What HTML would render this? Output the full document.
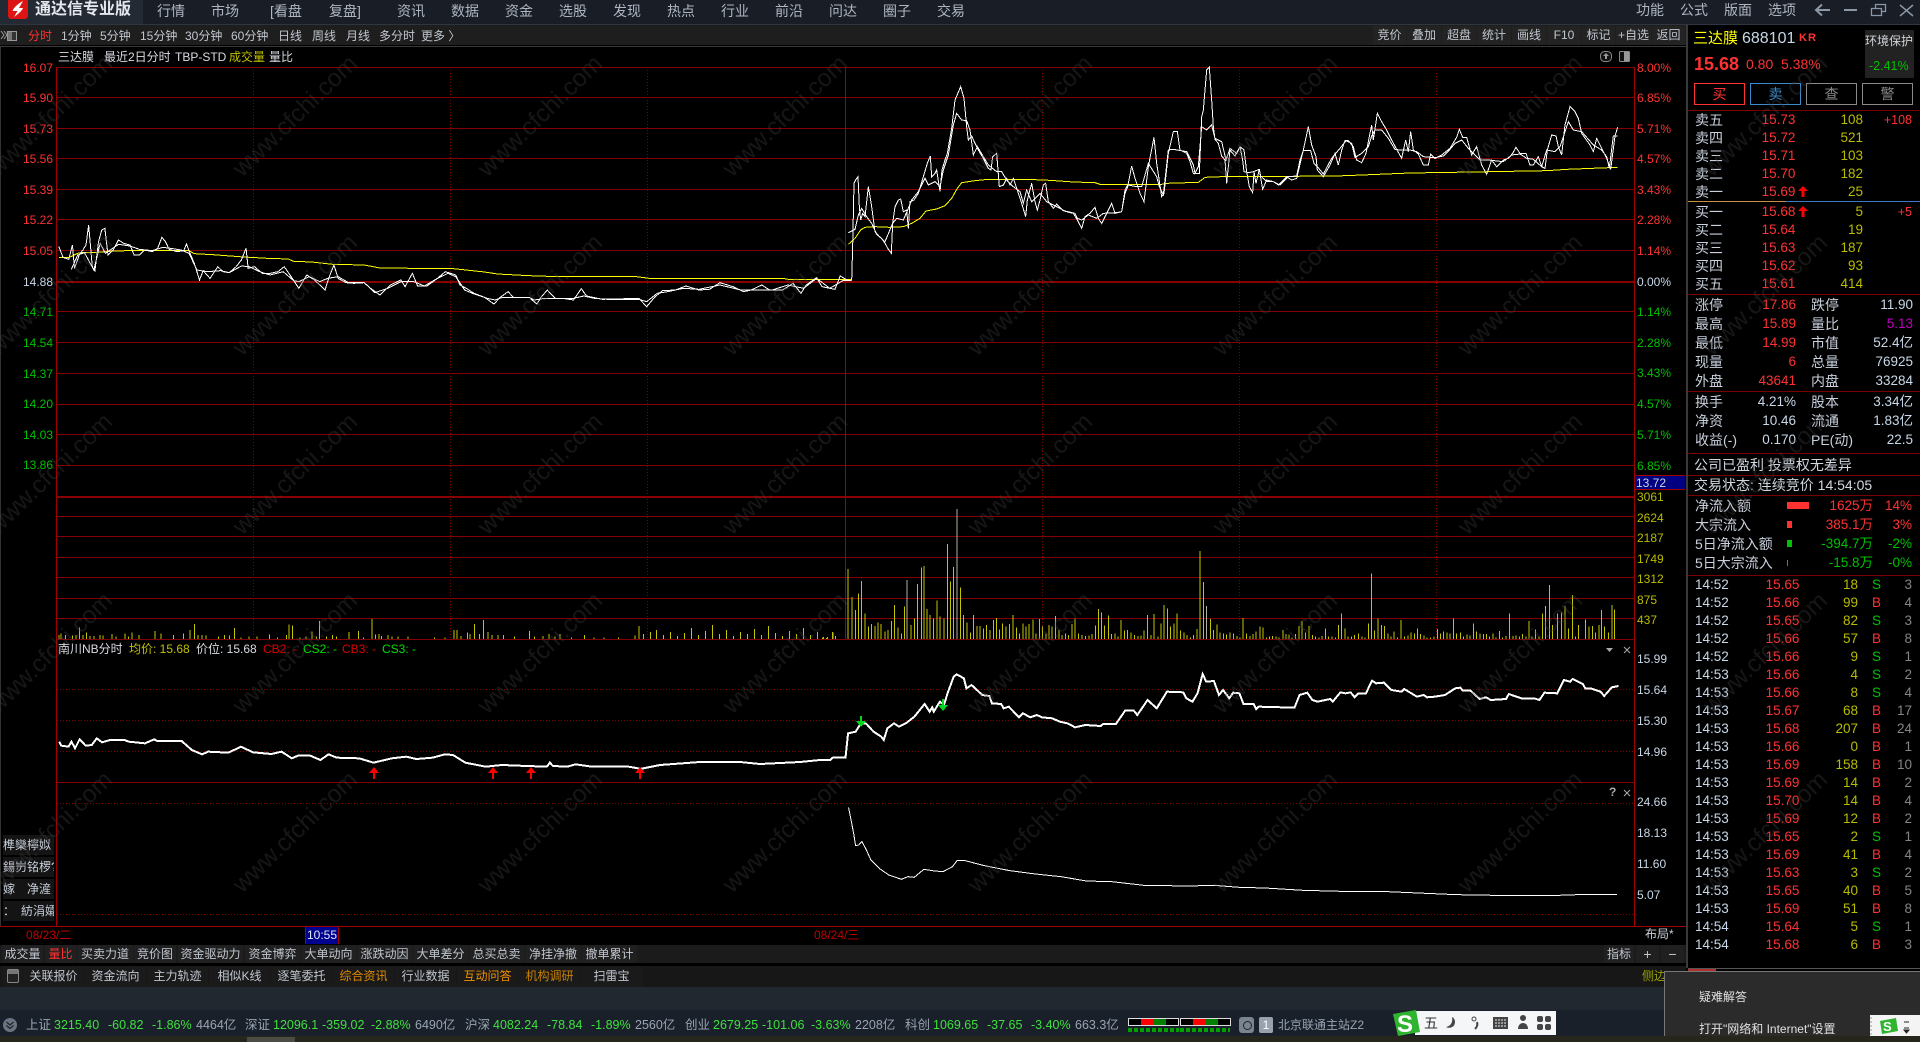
<!DOCTYPE html>
<html><head><meta charset="utf-8"><title>通达信专业版</title>
<style>
html,body{margin:0;padding:0;background:#000;width:1920px;height:1042px;overflow:hidden}
body{position:relative;font-family:"Liberation Sans","Noto Sans CJK SC",sans-serif;font-size:12px;color:#c8d0dc}
.a{position:absolute;white-space:nowrap;line-height:18px;height:18px}
.m{position:absolute;white-space:nowrap;font-size:14px;line-height:18px;top:2px;color:#aeb6c2}
.b{position:absolute;top:27px;white-space:nowrap;line-height:18px;color:#c0c6d0}
.tb{position:absolute;top:26px;height:19px;line-height:19px;background:#232323;text-align:center;color:#c0c6d0}
.l{position:absolute;left:13px;width:40px;text-align:right;line-height:18px}
.p{position:absolute;left:1637px;line-height:18px}
.red{color:#ff3232}.grn{color:#00c000}.wht{color:#c8d8e8}.yel{color:#b8bc00}
.r{position:absolute;left:1688px;width:232px;height:18px;line-height:18px;font-size:13.5px}
.r span{position:absolute;white-space:nowrap}
.n{left:7px;font-size:14px;color:#c8d0dc}.v{left:73.6px;color:#ff3232}.q{right:57px;color:#b8bc00}.d{right:8px;font-size:12.5px;color:#ff3232}
.v1{right:124px}.n2{left:123px;font-size:14px;color:#c8d0dc}.v2{right:7px;color:#c8d8e8}
.tm{left:7px;color:#c8d8e8}.pr{left:77.6px;color:#ff3232}.qq{right:62px;color:#b8bc00}.bs{left:184px}.ct{right:8px;color:#858585}
.c{position:absolute;top:945px;height:18px;line-height:18px;background:#202020;text-align:center;color:#c0c6d0}
.e{position:absolute;top:966px;height:21px;line-height:21px;background:#1a1a1a;text-align:center;color:#c0c6d0;width:61px}
.s{position:absolute;top:1016px;line-height:18px;font-size:12.5px;white-space:nowrap;color:#98a4b4}
.g{color:#3fe03f}
.btn{position:absolute;top:83px;width:49px;height:20px;line-height:20px;text-align:center;font-size:14px;box-sizing:content-box}
.gb{position:absolute;left:3px;width:51px;height:20px;line-height:20px;background:#141414;color:#c8d0dc;overflow:hidden;white-space:nowrap;font-size:12px}
.lin{vector-effect:non-scaling-stroke;fill:none;shape-rendering:crispEdges}
</style></head><body>

<!-- title bar -->
<div style="position:absolute;left:0;top:0;width:1920px;height:24px;background:#181d26"></div>
<div style="position:absolute;left:0;top:0;width:143px;height:24px;background:#242a33"></div>
<div style="position:absolute;left:0;top:24px;width:1920px;height:1px;background:#2f3640"></div>
<div class="a" style="left:35px;top:1px;font-size:16px;font-weight:bold;color:#e4e8ee;line-height:18px">通达信专业版</div>
<div class="m" style="left:157px">行情</div><div class="m" style="left:211px">市场</div><div class="m" style="left:270px">[看盘</div><div class="m" style="left:329px">复盘]</div><div class="m" style="left:397px">资讯</div><div class="m" style="left:451px">数据</div><div class="m" style="left:505px">资金</div><div class="m" style="left:559px">选股</div><div class="m" style="left:613px">发现</div><div class="m" style="left:667px">热点</div><div class="m" style="left:721px">行业</div><div class="m" style="left:775px">前沿</div><div class="m" style="left:829px">问达</div><div class="m" style="left:883px">圈子</div><div class="m" style="left:937px">交易</div>
<div class="m" style="left:1636px;top:1px">功能</div><div class="m" style="left:1680px;top:1px">公式</div><div class="m" style="left:1724px;top:1px">版面</div><div class="m" style="left:1768px;top:1px">选项</div>

<!-- toolbar -->
<div style="position:absolute;left:0;top:25px;width:1686px;height:20px;background:#1e1e1e"></div>
<div style="position:absolute;left:0;top:46px;width:1686px;height:1px;background:#3a3a3a"></div>
<div class="b" style="left:28px;color:#ff3232">分时</div><div class="b" style="left:61px">1分钟</div><div class="b" style="left:100px">5分钟</div><div class="b" style="left:140px">15分钟</div><div class="b" style="left:185px">30分钟</div><div class="b" style="left:231px">60分钟</div><div class="b" style="left:278px">日线</div><div class="b" style="left:312px">周线</div><div class="b" style="left:346px">月线</div><div class="b" style="left:379px">多分时</div><div class="b" style="left:421px">更多 〉</div>
<div class="tb" style="left:1373px;width:33px">竞价</div><div class="tb" style="left:1407px;width:34px">叠加</div><div class="tb" style="left:1442px;width:34px">超盘</div><div class="tb" style="left:1477px;width:34px">统计</div><div class="tb" style="left:1512px;width:34px">画线</div><div class="tb" style="left:1547px;width:34px">F10</div><div class="tb" style="left:1582px;width:33px">标记</div><div class="tb" style="left:1616px;width:35px">+自选</div><div class="tb" style="left:1652px;width:33px">返回</div>

<!-- chart grid & lines -->
<svg width="1920" height="1042" style="position:absolute;left:0;top:0" xmlns="http://www.w3.org/2000/svg">
<g fill="none" shape-rendering="crispEdges">
<path stroke="#850000" d="M56 67.5H1634M56 97.5H1634M56 128.5H1634M56 158.5H1634M56 189.5H1634M56 219.5H1634M56 250.5H1634M56 311.5H1634M56 342.5H1634M56 373.5H1634M56 404.5H1634M56 434.5H1634M56 465.5H1634M56 516.5H1634M56 536.5H1634M56 557.5H1634M56 577.5H1634M56 598.5H1634M56 618.5H1634M56 639.5H1634M56 782.5H1634"/>
<path stroke="#8a0000" stroke-width="2" d="M56 282H1634M56 497H1634"/>
<path stroke="#a00000" d="M56.5 67V926M1634.5 67V926M845.5 67V639M0 926.5H1686"/>
<path stroke="#800000" stroke-dasharray="1 2" d="M253.5 70V639M450.5 70V639M647.5 70V639M1042.5 70V639M1239.5 70V639M1436.5 70V639M57 689.5H1634M57 720.5H1634M57 751.5H1634M57 803.5H1634M57 914.5H1634"/>
<path stroke="#333" d="M0.5 47V926"/>
<path stroke="#3a3a3a" stroke-width="2" d="M1687 25V968"/>
<!-- right panel rules -->
<path stroke="#7a0000" d="M1688 110.5H1920M1688 294.5H1920M1688 391.5H1920M1688 453.5H1920M1688 475.5H1920M1688 495.5H1920M1688 575.5H1920"/>
<path stroke="#c89040" d="M1688 201.5H1786"/><path stroke="#3c78c8" d="M1786 201.5H1920"/>
<path stroke="#555" d="M1688 968.5H1920"/>
</g>

<!-- volume -->
<g stroke="#c4c400" transform="translate(0,480) scale(.40816,.33333)">
<path class="lin" stroke="#c4c400" d="M145 477V465M150 477V460M160 477V465M178 477V467M186 477V465M195 477V442M203 477V465M212 477V457M220 477V468M230 477V468M245 477V465M252 477V467M275 477V462M284 477V470M306 477V460M315 477V470M324 477V458M340 477V465M380 477V453M395 477V460M425 477V465M450 477V460M465 477V450M476 477V432M485 477V465M495 477V465M505 477V467M535 477V470M550 477V465M562 477V467M574 477V444M590 477V472M610 477V470M630 477V470M660 477V463M680 477V472M702 477V465M708 477V433M717 477V436M735 477V472M750 477V470M765 477V454M775 477V470M783 477V423M800 477V470M815 477V465M825 477V470M855 477V456M878 477V453M890 477V472M912 477V417M920 477V463M928 477V462M935 477V468M950 477V465M960 477V470M975 477V470M1000 477V470M1065 477V472M1090 477V472M1112 477V450M1120 477V450M1130 477V468M1145 477V457M1152 477V462M1162 477V432M1175 477V462M1184 477V420M1195 477V456M1205 477V465M1220 477V465M1233 477V465M1260 477V470M1297 477V453M1310 477V470M1330 477V468M1345 477V462M1360 477V470M1372 477V462M1400 477V472M1432 477V465M1455 477V472M1480 477V472M1515 477V472M1556 477V467M1565 477V438"/>
</g>
<path shape-rendering="crispEdges" stroke="#c4c400" fill="none" d="M643.5 639V634M650.5 639V632M656.5 639V630M663.5 639V635M670.5 639V632M677.5 639V636M684.5 639V633M691.5 639V628M698.5 639V635M705.5 639V631M712.5 639V625M719.5 639V634M726.5 639V630M733.5 639V636M740.5 639V632M747.5 639V634M754.5 639V629M761.5 639V635M768.5 639V626M775.5 639V633M782.5 639V636M789.5 639V631M796.5 639V634M803.5 639V628M810.5 639V635M817.5 639V632M823.5 639V637M827.5 639V637M832.5 639V632M835.5 639V636"/>
<g transform="translate(820,480) scale(.5102,.33333)">
<path class="lin" stroke="#c4c400" d="M55 477V267M63 477V351M70 477V390M75 477V340M81 477V303M88 477V400M95 477V440M101 477V432M108 477V438M114 477V427M120 477V432M127 477V455M133 477V450M140 477V423M146 477V375M153 477V443M160 477V460M166 477V380M178 477V435M185 477V415M191 477V312M199 477V263M204 477V258M210 477V387M216 477V405M222 477V415M229 477V362M235 477V410M243 477V415M250 477V192M256 477V305M262 477V261M275 477V323M281 477V405M288 477V427M295 477V458M301 477V405M308 477V438M314 477V438M320 477V445M326 477V435M333 477V450M340 477V420M346 477V414M352 477V448M358 477V430M365 477V440M371 477V432M378 477V405M385 477V442M391 477V460M398 477V430M404 477V440M410 477V432M417 477V418M423 477V460M430 477V417M436 477V440M443 477V460M449 477V435M455 477V440M462 477V408M468 477V450M474 477V465M481 477V460M487 477V465M494 477V432M500 477V415M507 477V460M514 477V465M520 477V468M527 477V467M533 477V462M540 477V436M546 477V387M552 477V397M558 477V437M565 477V407M571 477V462M578 477V460M584 477V470M590 477V420M597 477V452M603 477V450M610 477V458M616 477V465M623 477V468M629 477V467M635 477V452M642 477V405M649 477V465M655 477V402M662 477V470M668 477V430M674 477V375M681 477V385M687 477V440M694 477V430M700 477V400M707 477V452M713 477V458M719 477V465M726 477V472M732 477V465M739 477V447M745 477V213M752 477V306M765 477V417M771 477V450M778 477V434M784 477V458M791 477V460M797 477V463M804 477V457M810 477V460M817 477V468M823 477V472M829 477V414M836 477V460M843 477V468M849 477V462M855 477V455M862 477V440M868 477V442M875 477V472M881 477V470M887 477V468M894 477V470M900 477V472M907 477V450M913 477V462M919 477V464M925 477V473M932 477V462M939 477V438M945 477V423M952 477V457M958 477V438M965 477V465M971 477V470M978 477V472M984 477V468M991 477V445M997 477V470M1004 477V470M1010 477V472M1016 477V435M1022 477V400M1029 477V445M1035 477V470M1042 477V470M1048 477V465M1055 477V460M1062 477V470M1068 477V472M1075 477V430M1081 477V280M1087 477V452M1094 477V415M1101 477V435M1106 477V438M1113 477V460M1119 477V470M1125 477V455M1132 477V472M1139 477V420M1146 477V470M1152 477V466M1158 477V458M1165 477V460M1171 477V445M1177 477V462M1184 477V466M1190 477V472M1197 477V472M1203 477V470M1210 477V447M1216 477V460M1222 477V455M1229 477V457M1235 477V460M1242 477V415M1248 477V460M1255 477V458M1261 477V470M1268 477V463M1274 477V466M1281 477V430M1287 477V455M1294 477V460M1300 477V462M1306 477V462M1312 477V470M1319 477V460M1325 477V472M1332 477V453M1338 477V472M1345 477V468M1351 477V400M1358 477V468M1364 477V466M1371 477V470M1377 477V462M1384 477V470M1390 477V423M1396 477V470M1402 477V448M1409 477V470M1416 477V400M1422 477V378M1430 477V315M1436 477V435M1446 477V400M1453 477V398M1460 477V378M1467 477V445M1475 477V345M1481 477V470M1487 477V435M1500 477V418M1507 477V440M1514 477V438M1520 477V458M1527 477V435M1532 477V390M1538 477V440M1545 477V458M1552 477V375M1557 477V388M5 477V472M13 477V474M25 477V458M30 477V468"/>
<path class="lin" stroke="#b0b0a0" d="M269 477V87M171 477V300M758 477V378"/>
</g>

<!-- day 1 price -->
<g transform="translate(40,210) scale(.523,.33333)">
<polyline class="lin" stroke="#ffff00" stroke-width="1" points="36,143 55,143 72,130 85,127 105,128 130,124 165,122 270,121 285,122 295,131 330,134 390,141 435,145 475,147 485,154 520,156 560,163 620,165 650,174 790,176 815,180 850,186 875,192 935,197 990,200 1140,200 1165,205 1420,205 1430,208 1552,209"/>
<polyline class="lin" stroke="#fff" points="60,178 72,135 85,128 103,180 115,100 125,130 150,103 172,108 190,118 215,122 235,112 250,115 270,120 285,130 300,180 320,185 345,182 362,188 385,168 400,170 420,185 440,195 465,185 485,212 495,215 515,200 535,215 550,205 570,200 590,218 620,218 640,248 665,235 690,215 715,215 735,228 760,205 780,190 795,200 812,240 830,252 855,265 870,270 885,262 935,262 945,270 965,265 990,265 1020,265 1040,258 1060,265 1085,268 1145,268 1160,275 1180,250 1200,245 1230,235 1260,238 1300,225 1340,240 1400,240 1430,225 1460,235 1485,205 1510,235 1535,212 1552,212"/>
<polyline class="lin" stroke="#fff" points="36,110 44,142 55,148 62,105 66,175 75,135 82,120 88,105 93,45 100,170 105,183 112,95 118,60 124,55 130,135 140,120 150,90 160,100 172,105 180,135 190,135 200,120 215,125 225,115 233,82 240,95 247,118 262,125 275,122 280,102 287,130 295,160 305,210 312,182 325,205 340,170 350,185 362,188 375,170 385,150 394,115 398,175 410,170 425,190 440,190 455,185 467,170 478,195 495,235 510,195 525,210 545,240 552,205 562,165 570,205 585,218 600,220 620,218 632,235 650,255 660,240 670,225 690,210 698,230 712,190 722,228 740,228 760,205 775,185 795,195 803,225 815,235 830,250 850,262 868,282 880,262 895,245 905,262 935,262 950,282 958,262 970,240 985,265 1000,265 1020,270 1035,236 1045,258 1075,268 1145,265 1160,290 1175,262 1190,242 1215,240 1235,228 1260,240 1280,238 1300,218 1325,230 1345,245 1360,240 1380,225 1395,240 1420,240 1440,220 1455,250 1465,225 1485,203 1495,230 1520,238 1530,198 1545,212 1552,212"/>
</g>
<!-- day 2 price -->
<g transform="translate(840,50) scale(.33333)">
<polyline class="lin" stroke="#ffff00" stroke-width="1" points="25,583 45,565 62,540 75,532 105,530 150,532 190,530 215,520 240,505 258,483 290,477 315,467 335,445 352,415 365,398 405,392 445,388 560,388 630,391 700,396 765,398 780,403 855,403 965,403 980,400 1075,397 1095,382 1145,380 1200,380"/>
<polyline class="lin" stroke="#fff" points="25,548 45,538 55,495 65,475 80,500 95,520 108,548 118,560 135,575 158,520 170,505 190,510 205,475 215,450 235,425 255,385 265,405 285,395 300,410 310,360 325,315 340,225 350,190 365,210 380,212 390,240 400,315 412,290 430,320 445,345 470,365 485,365 500,390 520,410 540,425 550,460 560,420 575,455 600,430 620,455 650,470 675,483 705,490 712,505 725,510 745,495 770,505 790,490 830,488 845,485 855,430 865,405 890,410 905,410 925,340 950,380 958,410 970,435 985,300 1000,298 1040,305 1060,345 1065,370 1075,350 1085,230 1100,240 1115,225 1125,265 1145,275 1158,330 1170,295 1190,310 1200,290"/>
<polyline class="lin" stroke="#fff" points="35,692 38,590 42,400 48,388 54,380 58,470 62,510 68,490 75,500 85,410 95,470 105,545 112,555 125,565 135,580 145,598 154,610 158,520 165,470 175,450 182,447 190,485 200,480 205,535 210,455 222,450 235,430 250,380 262,340 271,318 275,380 285,370 290,360 300,425 306,360 315,330 322,310 335,235 345,150 362,110 372,145 380,230 385,270 395,258 405,280 415,300 430,325 445,355 453,360 458,320 470,310 478,410 490,405 500,385 510,405 520,385 535,430 545,460 557,500 562,450 575,400 585,455 592,480 600,450 610,405 617,400 625,455 640,475 650,462 670,482 690,488 700,490 712,510 725,535 735,500 750,490 765,472 775,505 785,520 800,490 815,460 825,490 845,485 855,420 865,400 875,348 885,385 900,430 912,455 925,350 942,262 950,340 965,440 972,430 985,310 1000,245 1012,245 1020,300 1040,310 1050,335 1060,370 1078,370 1085,200 1090,180 1100,60 1108,52 1115,150 1120,230 1125,268 1135,280 1145,318 1155,330 1160,400 1170,300 1185,318 1200,290"/>
</g>
<g transform="translate(1240,50) scale(.33333)">
<polyline class="lin" stroke="#ffff00" stroke-width="1" points="0,380 290,378 390,374 510,369 700,366 920,362 980,358 1133,352"/>
<polyline class="lin" stroke="#fff" points="0,290 12,300 20,365 28,410 38,428 42,365 48,400 58,358 68,418 80,390 100,395 115,405 140,380 155,390 170,385 190,300 205,230 215,285 228,320 232,360 250,380 270,345 285,310 295,345 305,300 315,272 325,272 340,290 350,330 365,338 378,310 395,225 400,270 412,190 425,215 440,240 455,270 470,298 485,325 497,270 505,305 512,245 520,300 535,312 550,345 565,345 572,312 585,325 605,315 630,295 650,262 658,238 668,262 680,262 695,315 710,290 725,345 740,373 755,330 770,350 790,330 805,325 818,310 828,292 840,310 858,310 870,345 880,345 895,320 905,350 915,355 922,300 935,255 948,258 955,290 965,315 975,225 990,170 1005,185 1015,205 1025,250 1050,285 1060,305 1070,265 1085,295 1100,325 1112,358 1125,258 1133,232"/>
<polyline class="lin" stroke="#fff" points="0,290 8,330 12,365 25,368 40,365 58,358 62,378 80,395 100,395 120,405 145,380 170,378 180,330 190,302 212,302 222,340 232,350 250,372 275,325 300,295 318,272 335,280 345,322 365,310 385,290 395,258 405,240 425,240 445,265 465,298 480,300 495,300 510,300 530,305 550,320 575,322 590,322 610,318 630,298 645,280 665,270 685,295 700,310 720,330 745,330 790,335 815,315 840,312 860,325 880,328 905,350 920,300 945,305 960,290 985,215 1000,240 1025,245 1060,285 1085,300 1100,320 1108,355 1120,258 1133,258"/>
</g>

<!-- indicator line -->
<g transform="translate(0,480) scale(.40816,.33333)">
<polyline class="lin" stroke="#fff" stroke-width="2" points="145,785 150,797 168,800 175,785 184,805 195,778 210,797 225,795 237,775 250,787 270,780 305,780 315,785 355,790 378,778 385,783 445,783 470,810 495,823 510,815 560,818 590,800 620,817 665,822 690,815 715,835 730,827 760,827 785,840 805,823 825,833 880,835 915,848 960,835 995,830 1020,837 1060,833 1090,823 1110,825 1140,848 1190,860 1230,855 1290,858 1340,860 1347,848 1355,858 1390,860 1410,853 1450,860 1540,860 1568,866"/>
</g>
<polyline fill="none" stroke="#fff" stroke-width="2" shape-rendering="crispEdges" points="640,769 660,765 700,762 740,762 760,764 800,762 820,760"/>
<g transform="translate(820,480) scale(.5102,.33333)">
<polyline class="lin" stroke="#fff" stroke-width="2" points="0,840 20,840 25,833 50,833 55,760 70,755 80,730 90,730 105,755 120,770 125,780 132,745 145,730 155,740 170,728 185,710 205,672 215,695 220,682 223,695 235,665 243,675 250,640 262,590 268,583 282,595 287,625 297,615 318,645 332,648 337,670 355,672 360,685 370,680 390,712 398,700 412,712 425,705 435,712 455,715 470,725 485,730 500,742 520,735 550,738 555,732 580,732 598,692 615,692 622,705 642,660 660,685 680,635 712,637 718,655 730,665 740,640 750,582 757,605 772,603 782,645 790,630 802,655 810,638 822,640 830,672 850,672 855,687 860,680 930,683 940,645 955,638 965,660 975,665 1000,657 1005,665 1020,637 1030,640 1040,637 1048,652 1055,640 1070,640 1082,602 1090,610 1105,608 1120,630 1140,635 1145,627 1170,650 1183,645 1190,652 1205,650 1225,645 1245,625 1255,623 1260,632 1275,632 1293,657 1305,652 1315,660 1345,657 1350,642 1365,650 1375,655 1400,655 1410,660 1420,638 1445,640 1458,600 1470,605 1475,597 1495,612 1500,625 1510,625 1530,635 1537,648 1552,622 1565,618"/>
</g>
<!-- signal arrows -->
<g fill="#ff0000"><path d="M374 767l5 6h-4v6h-2v-6h-4zM493 767l5 6h-4v6h-2v-6h-4zM531 767l5 6h-4v6h-2v-6h-4zM640 767l5 6h-4v6h-2v-6h-4z"/></g>
<g fill="#00d820"><path d="M861 727l-5-6h4v-5h2v5h4zM943 711l-5-6h4v-6h2v6h4z"/></g>

<!-- lower indicator -->
<g transform="translate(640,800) scale(.63776,.33333)">
<polyline class="lin" stroke="#fff" stroke-width="1" points="327,22 335,100 338,137 343,135 348,125 355,150 362,180 375,205 390,225 410,238 420,230 430,232 445,208 462,213 475,215 490,200 497,182 510,182 540,197 580,212 620,222 660,230 700,243 740,245 790,256 860,258 900,256 940,262 980,264 1040,271 1120,275 1160,274 1220,279 1280,284 1340,286 1440,286 1470,284 1532,284"/>
</g>

<!-- window icons -->
<g fill="none" stroke="#8b98a8" stroke-width="2">
<path d="M1830 10H1816M1822 4.500L1816 10L1822 15.500"/>
<path d="M1844 10H1857"/>
<path stroke-width="1.300" d="M1871.500 8.500H1881.500V15.500H1871.500ZM1875.500 8V4.500H1885.500V11.500H1882"/>
<path stroke-width="1.500" d="M1900 5L1913 16M1913 5L1900 16"/>
</g>
<!-- logo -->
<rect x="8" y="-4" width="20" height="23" rx="3" fill="#dc1414"/>
<path d="M23 1C19 3 14 7 12.500 11H17.500L14 17C18 14 22 11 23 8H19Z" fill="#fff"/>
<!-- left toolbar icon -->
<path d="M1 31l3 4-3 4M4 31l3 4-3 4" stroke="#999" fill="none"/>
<rect x="7.500" y="31.500" width="9" height="9" fill="#333" stroke="#999"/><rect x="8" y="32" width="4" height="8" fill="#777"/>
<!-- chart icons -->
<rect x="1600.500" y="51.500" width="11" height="10" rx="4" fill="#111" stroke="#888"/><path d="M1606 53l3 3h-2v3h-2v-3h-2z" fill="#999"/>
<rect x="1619.500" y="51.500" width="10" height="10" rx="1" fill="#111" stroke="#888"/><rect x="1624" y="52" width="5" height="9" fill="#999"/>
<!-- small signs -->
<path d="M1606 648h7l-3.500 4z" fill="#aaa"/>
<path d="M1624 647l6 6M1630 647l-6 6M1624 790l6 6M1630 790l-6 6" stroke="#aaa" fill="none"/>
<!-- flow bars -->
<g shape-rendering="crispEdges">
<rect x="1787" y="502" width="22" height="7" fill="#ff3232"/><rect x="1787" y="521" width="5" height="7" fill="#ff3232"/><rect x="1787" y="540" width="5" height="7" fill="#00c000"/><rect x="1787" y="560" width="1" height="6" fill="#00c000"/>
</g>
<!-- order arrows -->
<path d="M1803 186l5 5h-3.500v6h-3v-6h-3.500zM1803 206l5 5h-3.500v6h-3v-6h-3.500z" fill="#ff0000"/>
</svg>

<!-- axis labels -->
<div class="l red" style="top:59px">16.07</div><div class="l red" style="top:89px">15.90</div><div class="l red" style="top:120px">15.73</div><div class="l red" style="top:150px">15.56</div><div class="l red" style="top:181px">15.39</div><div class="l red" style="top:211px">15.22</div><div class="l red" style="top:242px">15.05</div><div class="l wht" style="top:273px">14.88</div><div class="l grn" style="top:303px">14.71</div><div class="l grn" style="top:334px">14.54</div><div class="l grn" style="top:365px">14.37</div><div class="l grn" style="top:395px">14.20</div><div class="l grn" style="top:426px">14.03</div><div class="l grn" style="top:456px">13.86</div>
<div class="p red" style="top:59px">8.00%</div><div class="p red" style="top:89px">6.85%</div><div class="p red" style="top:120px">5.71%</div><div class="p red" style="top:150px">4.57%</div><div class="p red" style="top:181px">3.43%</div><div class="p red" style="top:211px">2.28%</div><div class="p red" style="top:242px">1.14%</div><div class="p wht" style="top:273px">0.00%</div><div class="p grn" style="top:303px">1.14%</div><div class="p grn" style="top:334px">2.28%</div><div class="p grn" style="top:364px">3.43%</div><div class="p grn" style="top:395px">4.57%</div><div class="p grn" style="top:426px">5.71%</div><div class="p grn" style="top:457px">6.85%</div>
<div style="position:absolute;left:1635px;top:475px;width:50px;height:15px;background:#000080;border-top:1px solid #a00000;border-bottom:1px solid #a00000;line-height:15px;color:#c8d8e8;padding-left:1px;box-sizing:border-box">13.72</div>
<div class="p yel" style="top:488px">3061</div><div class="p yel" style="top:509px">2624</div><div class="p yel" style="top:529px">2187</div><div class="p yel" style="top:550px">1749</div><div class="p yel" style="top:570px">1312</div><div class="p yel" style="top:591px">875</div><div class="p yel" style="top:611px">437</div>
<div class="p wht" style="top:650px">15.99</div><div class="p wht" style="top:681px">15.64</div><div class="p wht" style="top:712px">15.30</div><div class="p wht" style="top:743px">14.96</div><div class="p wht" style="top:793px">24.66</div><div class="p wht" style="top:824px">18.13</div><div class="p wht" style="top:855px">11.60</div><div class="p wht" style="top:886px">5.07</div>
<div class="a" style="left:1645px;top:925px;color:#c8d0dc">布局*</div>
<div class="a" style="left:1609px;top:783px;color:#aaa;font-weight:bold">?</div>

<!-- chart titles -->
<div class="a" style="left:58px;top:48px;color:#d8dce2">三达膜</div><div class="a" style="left:104px;top:48px;color:#d8dce2">最近2日分时</div><div class="a" style="left:175px;top:48px;color:#d8dce2">TBP-STD</div><div class="a" style="left:229px;top:48px;color:#c0c000">成交量</div><div class="a" style="left:269px;top:48px;color:#d8dce2">量比</div>
<div class="a" style="left:58px;top:640px;color:#d8dce2">南川NB分时</div><div class="a" style="left:129px;top:640px;color:#c0c000">均价: 15.68</div><div class="a" style="left:196px;top:640px;color:#d8dce2">价位: 15.68</div><div class="a" style="left:263px;top:640px;color:#e00000">CB2: -</div><div class="a" style="left:303px;top:640px;color:#00e000">CS2: -</div><div class="a" style="left:342px;top:640px;color:#e00000">CB3: -</div><div class="a" style="left:382px;top:640px;color:#00e000">CS3: -</div>

<!-- garbled left list -->
<div class="gb" style="top:835px">榫欒檸姒</div><div class="gb" style="top:857px">鍚岃铭椤?(</div><div class="gb" style="top:879px">嫁　净滻</div><div class="gb" style="top:901px">：　紡涓孀</div>

<!-- dates -->
<div class="a" style="left:26px;top:926px;color:#c00000">08/23/二</div>
<div class="a" style="left:305px;top:927px;width:34px;height:17px;line-height:16px;background:#000090;color:#e0e8f0;text-align:center;border-left:1px solid #a00000;border-right:1px solid #a00000;box-sizing:border-box">10:55</div>
<div class="a" style="left:814px;top:926px;color:#c00000">08/24/三</div>

<!-- bottom tabs -->
<div style="position:absolute;left:0;top:945px;width:1686px;height:18px;background:#1b1b1b"></div>
<div class="c" style="left:2px;width:41px">成交量</div><div class="c" style="left:45px;width:31px;color:#ff3232">量比</div><div class="c" style="left:77px;width:56px">买卖力道</div><div class="c" style="left:134px;width:42px">竞价图</div><div class="c" style="left:178px;width:65px">资金驱动力</div><div class="c" style="left:245px;width:55px">资金博弈</div><div class="c" style="left:301px;width:55px">大单动向</div><div class="c" style="left:357px;width:55px">涨跌动因</div><div class="c" style="left:413px;width:55px">大单差分</div><div class="c" style="left:469px;width:55px">总买总卖</div><div class="c" style="left:525px;width:56px">净挂净撤</div><div class="c" style="left:582px;width:55px">撤单累计</div>
<div class="c" style="left:1604px;width:30px">指标</div><div class="c" style="left:1636px;width:23px;font-size:14px">+</div><div class="c" style="left:1661px;width:23px;font-size:14px">−</div>

<div style="position:absolute;left:0;top:966px;width:1686px;height:21px;background:#171717"></div>
<div class="e" style="left:2px;width:20px"></div>
<div style="position:absolute;left:7px;top:969px;width:10px;height:12px;border:1px solid #888;border-radius:2px;background:linear-gradient(#777 35%,#222 35%)"></div>
<div class="e" style="left:23px">关联报价</div><div class="e" style="left:85px">资金流向</div><div class="e" style="left:147px">主力轨迹</div><div class="e" style="left:209px">相似K线</div><div class="e" style="left:271px">逐笔委托</div><div class="e" style="left:333px;color:#e08a00">综合资讯</div><div class="e" style="left:395px">行业数据</div><div class="e" style="left:457px;color:#f09000">互动问答</div><div class="e" style="left:519px;color:#c88000">机构调研</div><div class="e" style="left:581px">扫雷宝</div>
<div class="a" style="left:1642px;top:967px;color:#98a000">侧边</div>

<!-- status area -->
<div style="position:absolute;left:0;top:987px;width:1920px;height:23px;background:#222830"></div>
<div style="position:absolute;left:0;top:1010px;width:1920px;height:26px;background:#1a2029"></div>
<div style="position:absolute;left:0;top:1036px;width:1920px;height:6px;background:#26261c"></div>
<div style="position:absolute;left:247px;top:1037px;width:48px;height:5px;background:#4c4c44"></div>
<div style="position:absolute;left:3px;top:1018px;width:14px;height:14px;border-radius:7px;background:#6a7482"></div>
<svg width="14" height="14" style="position:absolute;left:3px;top:1018px"><path d="M3.500 4l3.500 3 3.500-3M3.500 7.500l3.500 3 3.500-3" fill="none" stroke="#222" stroke-width="1.200"/></svg>

<div class="s" style="left:26px">上证</div><div class="s g" style="left:54px">3215.40</div><div class="s g" style="left:108px">-60.82</div><div class="s g" style="left:152px">-1.86%</div><div class="s" style="left:196px">4464亿</div>
<div class="s" style="left:245px">深证</div><div class="s g" style="left:273px">12096.1</div><div class="s g" style="left:322px">-359.02</div><div class="s g" style="left:371px">-2.88%</div><div class="s" style="left:415px">6490亿</div>
<div class="s" style="left:465px">沪深</div><div class="s g" style="left:493px">4082.24</div><div class="s g" style="left:547px">-78.84</div><div class="s g" style="left:591px">-1.89%</div><div class="s" style="left:635px">2560亿</div>
<div class="s" style="left:685px">创业</div><div class="s g" style="left:713px">2679.25</div><div class="s g" style="left:762px">-101.06</div><div class="s g" style="left:811px">-3.63%</div><div class="s" style="left:855px">2208亿</div>
<div class="s" style="left:905px">科创</div><div class="s g" style="left:933px">1069.65</div><div class="s g" style="left:987px">-37.65</div><div class="s g" style="left:1031px">-3.40%</div><div class="s" style="left:1075px">663.3亿</div>
<svg width="130" height="20" style="position:absolute;left:1125px;top:1015px" shape-rendering="crispEdges">
<rect x="3.500" y="3.500" width="50" height="7" fill="#000" stroke="#ddd"/><rect x="16" y="4" width="12" height="6" fill="#ff0000"/><rect x="28" y="4" width="13" height="6" fill="#008000"/>
<rect x="55.500" y="3.500" width="50" height="7" fill="#000" stroke="#ddd"/><rect x="68" y="4" width="12" height="6" fill="#ff0000"/><rect x="80" y="4" width="13" height="6" fill="#008000"/>
<path d="M3 15H54M55 15H105" stroke="#00a000" stroke-width="4" stroke-dasharray="4 2"/>
</svg>
<div style="position:absolute;left:1239px;top:1017px;width:15px;height:16px;background:#7a8490;border-radius:3px"></div><div style="position:absolute;left:1243px;top:1021px;width:7px;height:7px;border:1px solid #222;border-radius:50%"></div>
<div style="position:absolute;left:1259px;top:1017px;width:14px;height:16px;background:#98a2ae;border-radius:2px;color:#fff;font-size:12px;text-align:center;line-height:16px">1</div>
<div class="s" style="left:1278px;font-size:12px">北京联通主站Z2</div>

<!-- IME -->
<div style="position:absolute;left:1415px;top:1011px;width:141px;height:24px;background:#f4f6f8"></div>
<svg width="32" height="30" style="position:absolute;left:1391px;top:1008px"><path d="M2 6L25 2L29 24L7 28Z" fill="#2fb42f"/><text x="6" y="24" font-family="Liberation Sans" font-weight="bold" font-size="24" fill="#fff">S</text></svg>
<div class="a" style="left:1424px;top:1014px;font-size:14px;color:#333">五</div>
<svg width="120" height="24" style="position:absolute;left:1440px;top:1011px"><path d="M12 6c1 5-1 9-6 10 4 2 9 0 9-5 0-2-1-4-3-5z" fill="#444"/><circle cx="34" cy="8" r="2" fill="none" stroke="#444"/><path d="M37 11c1 3 0 5-2 7" stroke="#444" stroke-width="2" fill="none"/><rect x="53" y="6" width="15" height="12" fill="#444"/><path d="M55 9h11M55 12h11M55 15h11" stroke="#eee" stroke-dasharray="2 1"/><circle cx="83" cy="7" r="3" fill="#444"/><path d="M78 18c0-8 10-8 10 0z" fill="#444"/><rect x="97" y="5" width="6" height="6" rx="2" fill="#444"/><rect x="105" y="5" width="6" height="6" rx="2" fill="#444"/><rect x="97" y="13" width="6" height="6" rx="2" fill="#444"/><rect x="105" y="13" width="6" height="6" rx="2" fill="#444"/></svg>

<!-- right panel -->
<div class="a" style="left:1693px;top:30px;font-size:15px;color:#ffff00">三达膜</div>
<div class="a" style="left:1742px;top:30px;font-size:16px;color:#c8d8e8">688101</div>
<div class="a" style="left:1799px;top:29px;font-size:11px;font-weight:bold;color:#ff3232;letter-spacing:1px">KR</div>
<div style="position:absolute;left:1865px;top:30px;width:49px;height:48px;background:#222"></div>
<div class="a" style="left:1865px;top:32px;color:#d0d4da">环境保护</div>
<div class="a" style="left:1869px;top:57px;font-size:12.5px;color:#00c000">-2.41%</div>
<div class="a" style="left:1694px;top:55px;font-size:18px;font-weight:bold;color:#ff3232">15.68</div>
<div class="a" style="left:1746px;top:55px;font-size:14px;color:#ff3232">0.80</div>
<div class="a" style="left:1781px;top:55px;font-size:14px;color:#ff3232">5.38%</div>
<div class="btn" style="left:1694px;border:1px solid #ff3232;color:#ff3232">买</div>
<div class="btn" style="left:1750px;border:1px solid #3c8ccc;color:#3c8ccc">卖</div>
<div class="btn" style="left:1806px;border:1px solid #8a8a8a;color:#8a8a8a">查</div>
<div class="btn" style="left:1862px;border:1px solid #8a8a8a;color:#8a8a8a">警</div>

<div class="r" style="top:111px"><span class="n">卖五</span><span class="v">15.73</span><span class="q">108</span><span class="d">+108</span></div>
<div class="r" style="top:129px"><span class="n">卖四</span><span class="v">15.72</span><span class="q">521</span></div>
<div class="r" style="top:147px"><span class="n">卖三</span><span class="v">15.71</span><span class="q">103</span></div>
<div class="r" style="top:165px"><span class="n">卖二</span><span class="v">15.70</span><span class="q">182</span></div>
<div class="r" style="top:183px"><span class="n">卖一</span><span class="v">15.69</span><span class="q">25</span></div>
<div class="r" style="top:203px"><span class="n">买一</span><span class="v">15.68</span><span class="q">5</span><span class="d">+5</span></div>
<div class="r" style="top:221px"><span class="n">买二</span><span class="v">15.64</span><span class="q">19</span></div>
<div class="r" style="top:239px"><span class="n">买三</span><span class="v">15.63</span><span class="q">187</span></div>
<div class="r" style="top:257px"><span class="n">买四</span><span class="v">15.62</span><span class="q">93</span></div>
<div class="r" style="top:275px"><span class="n">买五</span><span class="v">15.61</span><span class="q">414</span></div>

<div class="r" style="top:296px"><span class="n">涨停</span><span class="v1 red">17.86</span><span class="n2">跌停</span><span class="v2 grn">11.90</span></div>
<div class="r" style="top:315px"><span class="n">最高</span><span class="v1 red">15.89</span><span class="n2">量比</span><span class="v2" style="color:#c000c0">5.13</span></div>
<div class="r" style="top:334px"><span class="n">最低</span><span class="v1 red">14.99</span><span class="n2">市值</span><span class="v2">52.4亿</span></div>
<div class="r" style="top:353px"><span class="n">现量</span><span class="v1 red">6</span><span class="n2">总量</span><span class="v2">76925</span></div>
<div class="r" style="top:372px"><span class="n">外盘</span><span class="v1 red">43641</span><span class="n2">内盘</span><span class="v2 grn">33284</span></div>
<div class="r" style="top:393px"><span class="n">换手</span><span class="v1 wht">4.21%</span><span class="n2">股本</span><span class="v2">3.34亿</span></div>
<div class="r" style="top:412px"><span class="n">净资</span><span class="v1 wht">10.46</span><span class="n2">流通</span><span class="v2">1.83亿</span></div>
<div class="r" style="top:431px"><span class="n">收益(-)</span><span class="v1 wht">0.170</span><span class="n2">PE(动)</span><span class="v2">22.5</span></div>

<div class="a" style="left:1694px;top:456px;font-size:14px;color:#d0d8e0">公司已盈利 投票权无差异</div>
<div class="a" style="left:1694px;top:476px;font-size:14px;color:#d0d8e0">交易状态: 连续竞价 14:54:05</div>

<div class="r" style="top:497px"><span class="n">净流入额</span><span class="red" style="right:47px">1625万</span><span class="red" style="right:8px">14%</span></div>
<div class="r" style="top:516px"><span class="n">大宗流入</span><span class="red" style="right:47px">385.1万</span><span class="red" style="right:8px">3%</span></div>
<div class="r" style="top:535px"><span class="n">5日净流入额</span><span class="grn" style="right:47px">-394.7万</span><span class="grn" style="right:8px">-2%</span></div>
<div class="r" style="top:554px"><span class="n">5日大宗流入</span><span class="grn" style="right:47px">-15.8万</span><span class="grn" style="right:8px">-0%</span></div>

<div class="r" style="top:576px"><span class="tm">14:52</span><span class="pr">15.65</span><span class="qq">18</span><span class="bs grn">S</span><span class="ct">3</span></div>
<div class="r" style="top:594px"><span class="tm">14:52</span><span class="pr">15.66</span><span class="qq">99</span><span class="bs red">B</span><span class="ct">4</span></div>
<div class="r" style="top:612px"><span class="tm">14:52</span><span class="pr">15.65</span><span class="qq">82</span><span class="bs grn">S</span><span class="ct">3</span></div>
<div class="r" style="top:630px"><span class="tm">14:52</span><span class="pr">15.66</span><span class="qq">57</span><span class="bs red">B</span><span class="ct">8</span></div>
<div class="r" style="top:648px"><span class="tm">14:52</span><span class="pr">15.66</span><span class="qq">9</span><span class="bs grn">S</span><span class="ct">1</span></div>
<div class="r" style="top:666px"><span class="tm">14:53</span><span class="pr">15.66</span><span class="qq">4</span><span class="bs grn">S</span><span class="ct">2</span></div>
<div class="r" style="top:684px"><span class="tm">14:53</span><span class="pr">15.66</span><span class="qq">8</span><span class="bs grn">S</span><span class="ct">4</span></div>
<div class="r" style="top:702px"><span class="tm">14:53</span><span class="pr">15.67</span><span class="qq">68</span><span class="bs red">B</span><span class="ct">17</span></div>
<div class="r" style="top:720px"><span class="tm">14:53</span><span class="pr">15.68</span><span class="qq">207</span><span class="bs red">B</span><span class="ct">24</span></div>
<div class="r" style="top:738px"><span class="tm">14:53</span><span class="pr">15.66</span><span class="qq">0</span><span class="bs red">B</span><span class="ct">1</span></div>
<div class="r" style="top:756px"><span class="tm">14:53</span><span class="pr">15.69</span><span class="qq">158</span><span class="bs red">B</span><span class="ct">10</span></div>
<div class="r" style="top:774px"><span class="tm">14:53</span><span class="pr">15.69</span><span class="qq">14</span><span class="bs red">B</span><span class="ct">2</span></div>
<div class="r" style="top:792px"><span class="tm">14:53</span><span class="pr">15.70</span><span class="qq">14</span><span class="bs red">B</span><span class="ct">4</span></div>
<div class="r" style="top:810px"><span class="tm">14:53</span><span class="pr">15.69</span><span class="qq">12</span><span class="bs red">B</span><span class="ct">2</span></div>
<div class="r" style="top:828px"><span class="tm">14:53</span><span class="pr">15.65</span><span class="qq">2</span><span class="bs grn">S</span><span class="ct">1</span></div>
<div class="r" style="top:846px"><span class="tm">14:53</span><span class="pr">15.69</span><span class="qq">41</span><span class="bs red">B</span><span class="ct">4</span></div>
<div class="r" style="top:864px"><span class="tm">14:53</span><span class="pr">15.63</span><span class="qq">3</span><span class="bs grn">S</span><span class="ct">2</span></div>
<div class="r" style="top:882px"><span class="tm">14:53</span><span class="pr">15.65</span><span class="qq">40</span><span class="bs red">B</span><span class="ct">5</span></div>
<div class="r" style="top:900px"><span class="tm">14:53</span><span class="pr">15.69</span><span class="qq">51</span><span class="bs red">B</span><span class="ct">8</span></div>
<div class="r" style="top:918px"><span class="tm">14:54</span><span class="pr">15.64</span><span class="qq">5</span><span class="bs grn">S</span><span class="ct">1</span></div>
<div class="r" style="top:936px"><span class="tm">14:54</span><span class="pr">15.68</span><span class="qq">6</span><span class="bs red">B</span><span class="ct">3</span></div>

<div style="position:absolute;left:1688px;top:969px;width:28px;height:2px;background:#b03030"></div>

<!-- watermark -->
<svg width="1920" height="1042" style="position:absolute;left:0;top:0;pointer-events:none">
<defs><pattern id="wm" patternUnits="userSpaceOnUse" x="-71" y="28" width="245" height="179"><text transform="translate(122,89) rotate(-44)" text-anchor="middle" dominant-baseline="middle" font-family="Liberation Sans" font-size="24.500" fill="#404040" fill-opacity=".34">www.cfchi.com</text></pattern></defs>
<rect x="0" y="47" width="1920" height="879" fill="url(#wm)"/>
</svg>

<!-- popup -->
<div style="position:absolute;left:1664px;top:971px;width:256px;height:65px;background:#2b2b2b;border-top:1px solid #777;border-left:1px solid #777;box-sizing:border-box"></div>
<div class="a" style="left:1699px;top:988px;color:#e0e0e0">疑难解答</div>
<div class="a" style="left:1699px;top:1020px;color:#e0e0e0">打开"网络和 Internet"设置</div>
<div style="position:absolute;left:1870px;top:1015px;width:50px;height:21px;background:#f4f4f4"></div>
<svg width="50" height="21" style="position:absolute;left:1870px;top:1015px"><path d="M1 2v18" stroke="#999" stroke-dasharray="2 2"/><path d="M10 6L26 3L28 16L12 19Z" fill="#2fb42f"/><text x="13" y="16" font-family="Liberation Sans" font-weight="bold" font-size="13" fill="#fff">S</text><path d="M34 7h5M34 13h5M34 15l2.500 3 2.500-3z" stroke="#222" fill="#222"/></svg>
</body></html>
